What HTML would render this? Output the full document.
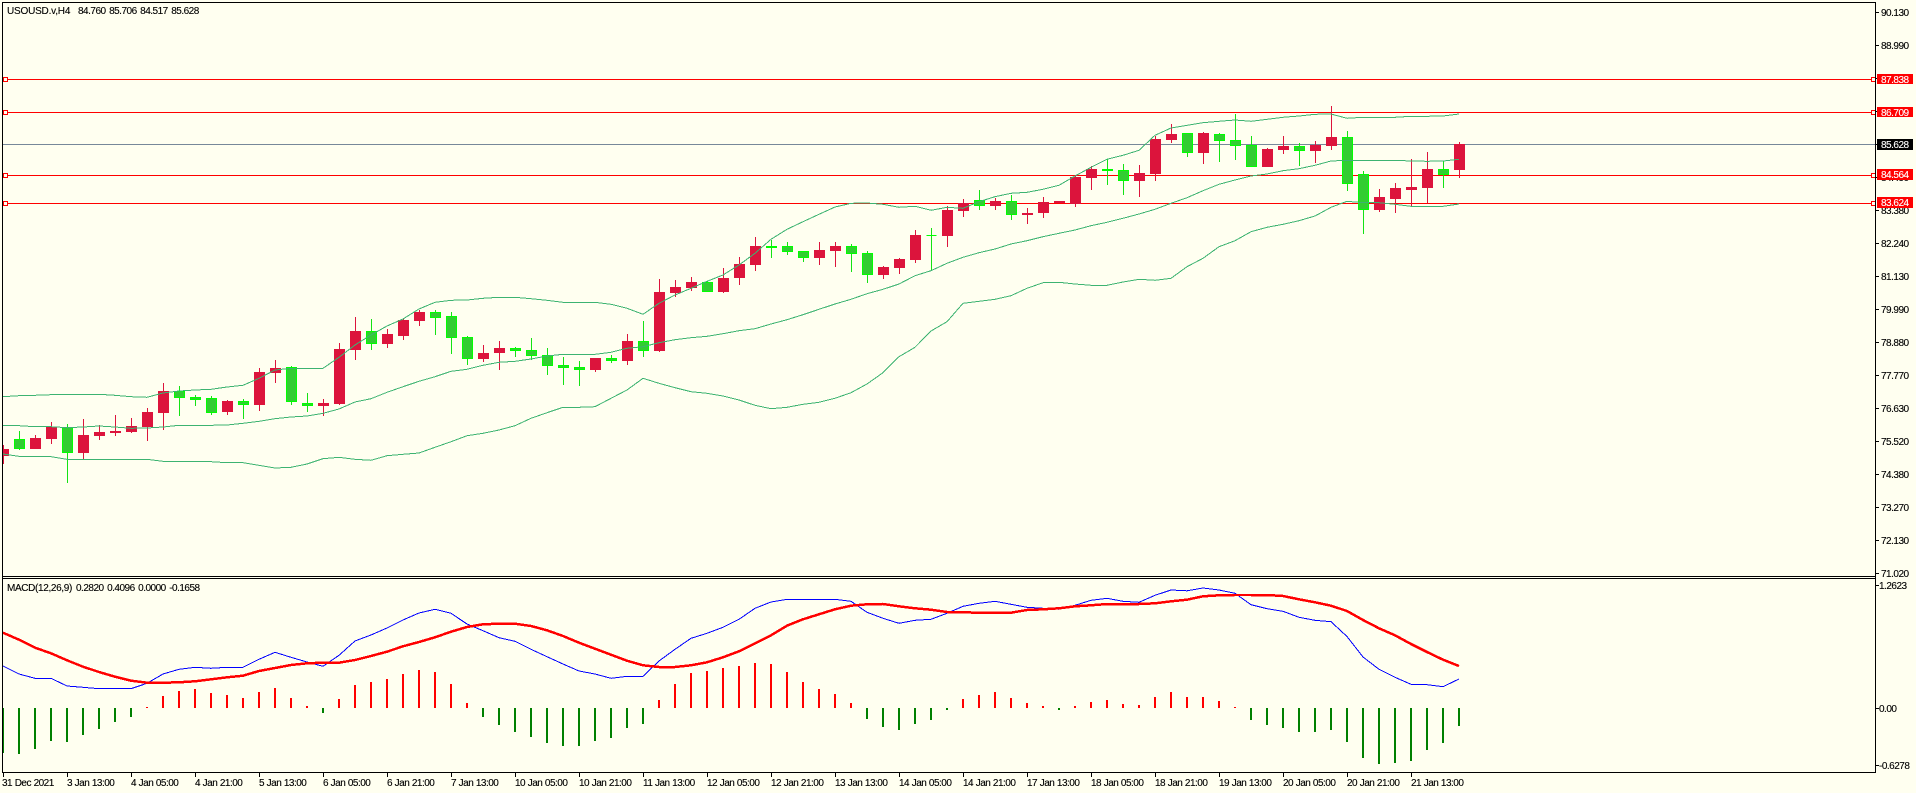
<!DOCTYPE html>
<html><head><meta charset="utf-8"><title>USOUSD.v,H4</title>
<style>
html,body{margin:0;padding:0;background:#fffff0;width:1916px;height:793px;overflow:hidden}
svg{display:block}
text{font-family:"Liberation Sans",sans-serif;font-size:10px;letter-spacing:-.5px;word-spacing:.3px;fill:#000;stroke:#000;stroke-width:.12px;white-space:pre}
text.w{fill:#fff;stroke:#fff}
text.n{word-spacing:1.2px}
</style></head><body>
<svg width="1916" height="793" viewBox="0 0 1916 793" shape-rendering="crispEdges" xmlns="http://www.w3.org/2000/svg">
<rect width="1916" height="793" fill="#fffff0"/>
<!-- price labels (some hidden by boxes) -->
<g>
<text x="1881" y="16">90.130</text><text x="1881" y="49">88.990</text><text x="1881" y="82">87.880</text><text x="1881" y="115">86.740</text><text x="1881" y="148">85.630</text><text x="1881" y="181">84.490</text><text x="1881" y="214">83.380</text><text x="1881" y="247">82.240</text><text x="1881" y="280">81.130</text><text x="1881" y="313">79.990</text><text x="1881" y="346">78.880</text><text x="1881" y="379">77.770</text><text x="1881" y="412">76.630</text><text x="1881" y="445">75.520</text><text x="1881" y="478">74.380</text><text x="1881" y="511">73.270</text><text x="1881" y="544">72.130</text><text x="1881" y="577">71.020</text>
</g>
<path d="M1875 12.5h4M1875 45.5h4M1875 78.5h4M1875 111.5h4M1875 144.5h4M1875 177.5h4M1875 210.5h4M1875 243.5h4M1875 276.5h4M1875 309.5h4M1875 342.5h4M1875 375.5h4M1875 408.5h4M1875 441.5h4M1875 474.5h4M1875 507.5h4M1875 540.5h4M1875 573.5h4M1875 585.5h4M1875 708.5h4M1875 765.5h4" stroke="#000" fill="none"/>
<!-- horizontal lines -->
<path d="M3 79.5H1875M3 112.5H1875M3 175.5H1875M3 203.5H1875" stroke="#f00" fill="none"/>
<path d="M3 144.5H1875" stroke="#778899" fill="none"/>
<!-- red wicks -->
<path transform="translate(.5,0)" stroke="#dc143c" fill="none" d="M3 445V464M35 435V449M51 422V444M83 419V459M99 425V440M115 415V436M131 418V433M147 408V441M163 383V430M227 400V415M259 368V411M275 360V383M323 399V416M339 343V405M355 317V360M387 329V348M403 318V340M419 310V326M483 345V362M499 341V370M595 358V372M627 334V365M659 279V352M675 280V297M691 277V291M723 268V293M739 257V285M755 237V271M819 242V265M835 242V267M883 266V279M899 258V274M915 230V263M947 206V247M963 199V217M995 198V210M1027 208V224M1043 197V218M1075 175V207M1091 166V190M1139 165V197M1155 136V181M1171 124V143M1203 132V164M1267 148V167M1283 136V154M1315 141V163M1331 106V150M1379 189V212M1395 183V213M1411 159V206M1427 152V203M1459 142V178"/>
<!-- green wicks -->
<path transform="translate(.5,0)" stroke="#14e214" fill="none" d="M19 431V450M67 424V483M179 386V416M195 395V406M211 396V415M243 399V419M291 366V405M307 393V412M371 319V350M435 310V335M451 312V354M467 336V365M515 347V357M531 338V360M547 348V375M563 357V385M579 361V386M611 355V363M643 321V357M707 281V292M771 240V258M787 242V255M803 251V262M851 244V272M867 251V283M931 228V271M979 190V210M1011 195V220M1107 159V185M1123 164V195M1187 133V157M1219 133V162M1235 114V160M1251 136V167M1299 143V166M1347 131V191M1363 171V234M1443 161V188"/>
<!-- red bodies -->
<path fill="#dc143c" d="M3 449H9V456H3zM30 438h11V449h-11zM46 427h11V439h-11zM78 435h11V453h-11zM94 432h11V436h-11zM110 431h11V433h-11zM126 426h11V432h-11zM142 412h11V427h-11zM158 391h11V413h-11zM222 401h11V412h-11zM254 372h11V405h-11zM270 368h11V373h-11zM318 403h11V406h-11zM334 349h11V404h-11zM350 331h11V350h-11zM382 334h11V344h-11zM398 320h11V336h-11zM414 312h11V321h-11zM478 353h11V359h-11zM494 348h11V353h-11zM590 358h11V370h-11zM622 341h11V361h-11zM654 292h11V351h-11zM670 287h11V293h-11zM686 282h11V288h-11zM718 278h11V292h-11zM734 264h11V278h-11zM750 246h11V265h-11zM814 250h11V258h-11zM830 246h11V251h-11zM878 267h11V275h-11zM894 259h11V268h-11zM910 235h11V260h-11zM942 210h11V236h-11zM958 203h11V211h-11zM990 201h11V206h-11zM1022 213h11V215h-11zM1038 202h11V213h-11zM1054 201h11V203h-11zM1070 177h11V204h-11zM1086 169h11V178h-11zM1134 173h11V181h-11zM1150 139h11V174h-11zM1166 134h11V140h-11zM1198 133h11V153h-11zM1262 149h11V167h-11zM1278 146h11V150h-11zM1310 145h11V151h-11zM1326 137h11V146h-11zM1374 197h11V210h-11zM1390 188h11V199h-11zM1406 187h11V190h-11zM1422 169h11V188h-11zM1454 144h11V170h-11z"/>
<!-- green bodies -->
<path transform="translate(.5,.5)" fill="#32cd32" stroke="#00ff00" d="M14 439h10V448h-10zM62 427h10V452h-10zM174 391h10V397h-10zM190 397h10V399h-10zM206 398h10V412h-10zM238 401h10V404h-10zM286 367h10V401h-10zM302 403h10V405h-10zM366 331h10V343h-10zM430 312h10V317h-10zM446 316h10V337h-10zM462 337h10V358h-10zM510 348h10V350h-10zM526 350h10V355h-10zM542 355h10V365h-10zM558 365h10V367h-10zM574 367h10V369h-10zM606 358h10V360h-10zM638 341h10V350h-10zM702 282h10V291h-10zM766 246h10V247h-10zM782 246h10V251h-10zM798 251h10V257h-10zM846 246h10V253h-10zM862 253h10V274h-10zM926 235h10V235h-10zM974 200h10V205h-10zM1006 201h10V214h-10zM1102 169h10V170h-10zM1118 170h10V180h-10zM1182 133h10V152h-10zM1214 134h10V140h-10zM1230 140h10V145h-10zM1246 145h10V166h-10zM1294 146h10V150h-10zM1342 137h10V183h-10zM1358 174h10V209h-10zM1438 169h10V174h-10z"/>
<!-- Bollinger -->
<g fill="none" stroke="#3cb371">
<polyline points="3,396.7 19,395.7 35,395.3 51,394.7 67,394.3 83,394.3 99,394.3 115,395.3 131,396.7 147,397.3 163,393 179,391 195,390 211,389.3 227,387 243,385.3 259,378.3 275,370 291,368.3 307,368.3 323,368.3 339,357.3 355,345 371,335 387,326 403,319 419,309 435,302.3 451,300.3 467,300 483,298.3 499,297.3 515,297.3 531,298.7 547,300.3 563,302.3 579,302.3 595,302.3 611,304.3 627,308.3 643,314.3 659,303.3 675,295 691,288.3 707,281.3 723,275 739,265 755,253.3 771,239.3 787,229.3 803,221.7 819,214.3 835,207 851,203.3 867,203 883,204.3 899,207.3 915,206.3 931,210.3 947,207.3 963,208.3 979,201.7 995,196.7 1011,193.3 1027,192.3 1043,189.3 1059,185.3 1075,176 1091,167.3 1107,159.3 1123,155.3 1139,150.3 1155,135.3 1171,128 1187,125.3 1203,122.7 1219,121.3 1235,120 1251,121.3 1267,119.3 1283,117.3 1299,116 1315,114.3 1331,114 1347,118.3 1363,117.3 1379,117.3 1395,117.3 1411,116.3 1427,116.3 1443,116 1459,114"/>
<polyline points="3,425.3 19,425.7 35,426.7 51,426.7 67,427.7 83,427 99,426 115,427 131,428.3 147,428 163,427 179,425.3 195,425.3 211,425.3 227,425 243,423.3 259,421.3 275,418.7 291,417 307,416 323,413.3 339,409 355,402 371,398.7 387,392.3 403,386.7 419,381.3 435,376.7 451,371.3 467,369.3 483,365.3 499,362.3 515,361.3 531,359 547,356 563,354.3 579,354.3 595,354.3 611,352.3 627,348.3 643,346.7 659,342.7 675,339.7 691,337.7 707,336.3 723,333.7 739,330.7 755,328.7 771,324 787,319.7 803,314.7 819,309.3 835,304 851,299.3 867,293.7 883,289.3 899,284 915,275.7 931,270.7 947,263.3 963,257.3 979,252.7 995,249 1011,244 1027,240.7 1043,236.7 1059,233.3 1075,230 1091,225.7 1107,222.3 1123,218.3 1139,214 1155,209.3 1171,203.3 1187,197.7 1203,190.7 1219,184.3 1235,180 1251,176 1267,174 1283,170.7 1299,168.7 1315,165.3 1331,161 1347,160.3 1363,160.3 1379,160.3 1395,160.3 1411,161 1427,161.3 1443,161 1459,159.3"/>
<polyline points="3,454 19,456.3 35,456.7 51,456.7 67,459.3 83,459.3 99,459.3 115,459.3 131,459.3 147,459.3 163,461.3 179,461.7 195,461.7 211,461.7 227,462.7 243,462.7 259,465.3 275,468 291,467.3 307,464 323,458.7 339,457.3 355,459.3 371,460.3 387,455.7 403,454.3 419,453 435,447.3 451,441.7 467,435.7 483,433.3 499,430 515,425.7 531,418.3 547,412.7 563,407.3 579,407.3 595,406.7 611,398.3 627,390 643,378.3 659,383.3 675,387.7 691,391.7 707,393.3 723,396 739,400 755,405.3 771,408.7 787,407.3 803,404.3 819,402.3 835,398.3 851,392.7 867,384 883,372.7 899,356.7 915,347.3 931,331 947,321.7 963,303.3 979,301.3 995,299.3 1011,295.7 1027,288.3 1043,282.7 1059,282.3 1075,284 1091,285.3 1107,285.3 1123,282 1139,279.3 1155,280.3 1171,278.3 1187,266.7 1203,258.3 1219,246.7 1235,240.7 1251,231.7 1267,227.3 1283,224.3 1299,220.7 1315,216 1331,207.3 1347,201.3 1363,202.7 1379,202.7 1395,204.3 1411,206.3 1427,206.3 1443,206.3 1459,204"/>
</g>
<!-- anchors + labels -->
<g fill="#fffff0" stroke="#f00">
<rect x="3.5" y="77.5" width="4" height="4"/><rect x="3.5" y="110.5" width="4" height="4"/><rect x="3.5" y="173.5" width="4" height="4"/><rect x="3.5" y="201.5" width="4" height="4"/>
<rect x="1871.5" y="77.5" width="4" height="4"/><rect x="1871.5" y="110.5" width="4" height="4"/><rect x="1871.5" y="173.5" width="4" height="4"/><rect x="1871.5" y="201.5" width="4" height="4"/>
</g>
<rect x="1877" y="74" width="36" height="10" fill="#f00"/><rect x="1877" y="107" width="36" height="10" fill="#f00"/><rect x="1877" y="169" width="36" height="11" fill="#f00"/><rect x="1877" y="197" width="36" height="11" fill="#f00"/><rect x="1877" y="139" width="36" height="11" fill="#000"/>
<text class="w" x="1881" y="83">87.838</text><text class="w" x="1881" y="116">86.709</text><text class="w" x="1881" y="178">84.564</text><text class="w" x="1881" y="206">83.624</text><text class="w" x="1881" y="148">85.628</text>
<!-- MACD histogram -->
<path fill="none" stroke="#008000" stroke-width="2" d="M3 708v45M19 708v46M35 708v41M51 708v33M67 708v34M83 708v27M99 708v21M115 708v14M131 708v9M323 708v5M483 708v9M499 708v17M515 708v24M531 708v29M547 708v35M563 708v38M579 708v38M595 708v33M611 708v30M627 708v20M643 708v16M867 708v11M883 708v19M899 708v22M915 708v16M931 708v12M947 708v2M1059 708v2M1251 708v12M1267 708v17M1283 708v20M1299 708v24M1315 708v24M1331 708v22M1347 708v34M1363 708v50M1379 708v56M1395 708v55M1411 708v53M1427 708v42M1443 708v35M1459 708v18"/>
<path fill="none" stroke="#f00" stroke-width="2" d="M147 708v-1M163 708v-12M179 708v-17M195 708v-19M211 708v-15M227 708v-13M243 708v-10M259 708v-16M275 708v-20M291 708v-10M307 708v-2M339 708v-9M355 708v-23M371 708v-26M387 708v-29M403 708v-34M419 708v-38M435 708v-36M451 708v-24M467 708v-5M659 708v-8M675 708v-24M691 708v-35M707 708v-37M723 708v-40M739 708v-42M755 708v-45M771 708v-44M787 708v-36M803 708v-26M819 708v-19M835 708v-14M851 708v-5M963 708v-9M979 708v-13M995 708v-16M1011 708v-10M1027 708v-5M1043 708v-2M1075 708v-2M1091 708v-6M1107 708v-8M1123 708v-4M1139 708v-3M1155 708v-11M1171 708v-16M1187 708v-11M1203 708v-11M1219 708v-7M1235 708v-1"/>
<!-- MACD lines -->
<polyline fill="none" stroke="#0000ff" points="3,666 19,674 35,678.3 51,678.3 67,686 83,687.3 99,688.7 115,688.7 131,688.7 147,683.3 163,674 179,669.3 195,667.3 211,668.3 227,667.3 243,667.3 259,659.3 275,652.3 291,657.3 307,662 323,666.3 339,655.3 355,641 371,635 387,628 403,620 419,613 435,609.3 451,613.3 467,624 483,630.7 499,637.7 515,641.3 531,649.3 547,656.7 563,664 579,671 595,674 611,678.3 627,676.3 643,676.3 659,661 675,649.3 691,638.3 707,633.3 723,627.3 739,619.3 755,608.3 771,602 787,599.3 803,599.3 819,599.3 835,599.3 851,601.3 867,612.3 883,618.3 899,623.3 915,620.3 931,619.3 947,613.3 963,606.3 979,603.3 995,601.3 1011,604.3 1027,607.3 1043,608.3 1059,609.3 1075,605.3 1091,600.3 1107,598.3 1123,601.3 1139,602.3 1155,595.3 1171,590 1187,590.8 1203,588 1219,590 1235,593.3 1251,604.7 1267,608.7 1283,611.3 1299,617.3 1315,620.3 1331,621.7 1347,636.5 1363,657 1379,669.3 1395,677.3 1411,684.3 1427,684.7 1443,686.7 1459,679"/>
<polyline fill="none" stroke="#ff0000" stroke-width="2.5" points="3,632.7 19,639.7 35,647.7 51,653.3 67,660.3 83,666.7 99,672 115,676.7 131,680.7 147,682.7 163,682.7 179,682.3 195,681.3 211,679.3 227,677.3 243,675.7 259,671 275,668 291,665 307,663.3 323,662.7 339,662.7 355,660 371,656 387,651.7 403,646.3 419,642 435,637.3 451,631.7 467,627 483,624.3 499,623.7 515,623.7 531,626 547,630.3 563,636 579,642.7 595,648.7 611,654.7 627,660.7 643,665.3 659,667 675,667 691,665.3 707,662.3 723,657.3 739,651.3 755,643.3 771,635.3 787,625.7 803,619.3 819,614.3 835,609.3 851,605.7 867,604.3 883,604 899,606.3 915,608.3 931,609.7 947,612 963,612.3 979,612.7 995,612.7 1011,612.7 1027,610 1043,609.3 1059,608.3 1075,606.3 1091,605.3 1107,604 1123,604 1139,604 1155,603.3 1171,601.3 1187,599.7 1203,596.3 1219,595.3 1235,595 1251,595 1267,595 1283,596 1299,599.3 1315,602.3 1331,605.7 1347,611 1363,620 1379,628.3 1395,635.3 1411,644 1427,652 1443,659.7 1459,666"/>
<!-- cover left overflow -->
<rect x="0" y="0" width="2" height="793" fill="#fffff0"/>
<!-- frame -->
<path fill="none" stroke="#000" d="M2.5 2.5H1875.5V772.5H2.5zM2 576.5H1875M2 578.5H1875"/>
<!-- x ticks -->
<path fill="none" stroke="#000" d="M3.5 773v4M67.5 773v4M131.5 773v4M195.5 773v4M259.5 773v4M323.5 773v4M387.5 773v4M451.5 773v4M515.5 773v4M579.5 773v4M643.5 773v4M707.5 773v4M771.5 773v4M835.5 773v4M899.5 773v4M963.5 773v4M1027.5 773v4M1091.5 773v4M1155.5 773v4M1219.5 773v4M1283.5 773v4M1347.5 773v4M1411.5 773v4"/>
<!-- labels -->
<text x="7" y="14" style="letter-spacing:-.2px">USOUSD.v,H4</text><text class="n" x="78" y="14">84.760 85.706 84.517 85.628</text>
<text x="7" y="591" style="letter-spacing:-.35px">MACD(12,26,9)</text><text class="n" x="76" y="591">0.2820 0.4096 0.0000 -0.1658</text>
<text x="1879" y="589">1.2623</text><text x="1879" y="712">0.00</text><text x="1879" y="769">-0.6278</text>
<g>
<text x="2" y="786">31 Dec 2021</text><text x="67" y="786">3 Jan 13:00</text><text x="131" y="786">4 Jan 05:00</text><text x="195" y="786">4 Jan 21:00</text><text x="259" y="786">5 Jan 13:00</text><text x="323" y="786">6 Jan 05:00</text><text x="387" y="786">6 Jan 21:00</text><text x="451" y="786">7 Jan 13:00</text><text x="515" y="786">10 Jan 05:00</text><text x="579" y="786">10 Jan 21:00</text><text x="643" y="786">11 Jan 13:00</text><text x="707" y="786">12 Jan 05:00</text><text x="771" y="786">12 Jan 21:00</text><text x="835" y="786">13 Jan 13:00</text><text x="899" y="786">14 Jan 05:00</text><text x="963" y="786">14 Jan 21:00</text><text x="1027" y="786">17 Jan 13:00</text><text x="1091" y="786">18 Jan 05:00</text><text x="1155" y="786">18 Jan 21:00</text><text x="1219" y="786">19 Jan 13:00</text><text x="1283" y="786">20 Jan 05:00</text><text x="1347" y="786">20 Jan 21:00</text><text x="1411" y="786">21 Jan 13:00</text>
</g>
</svg>
</body></html>
